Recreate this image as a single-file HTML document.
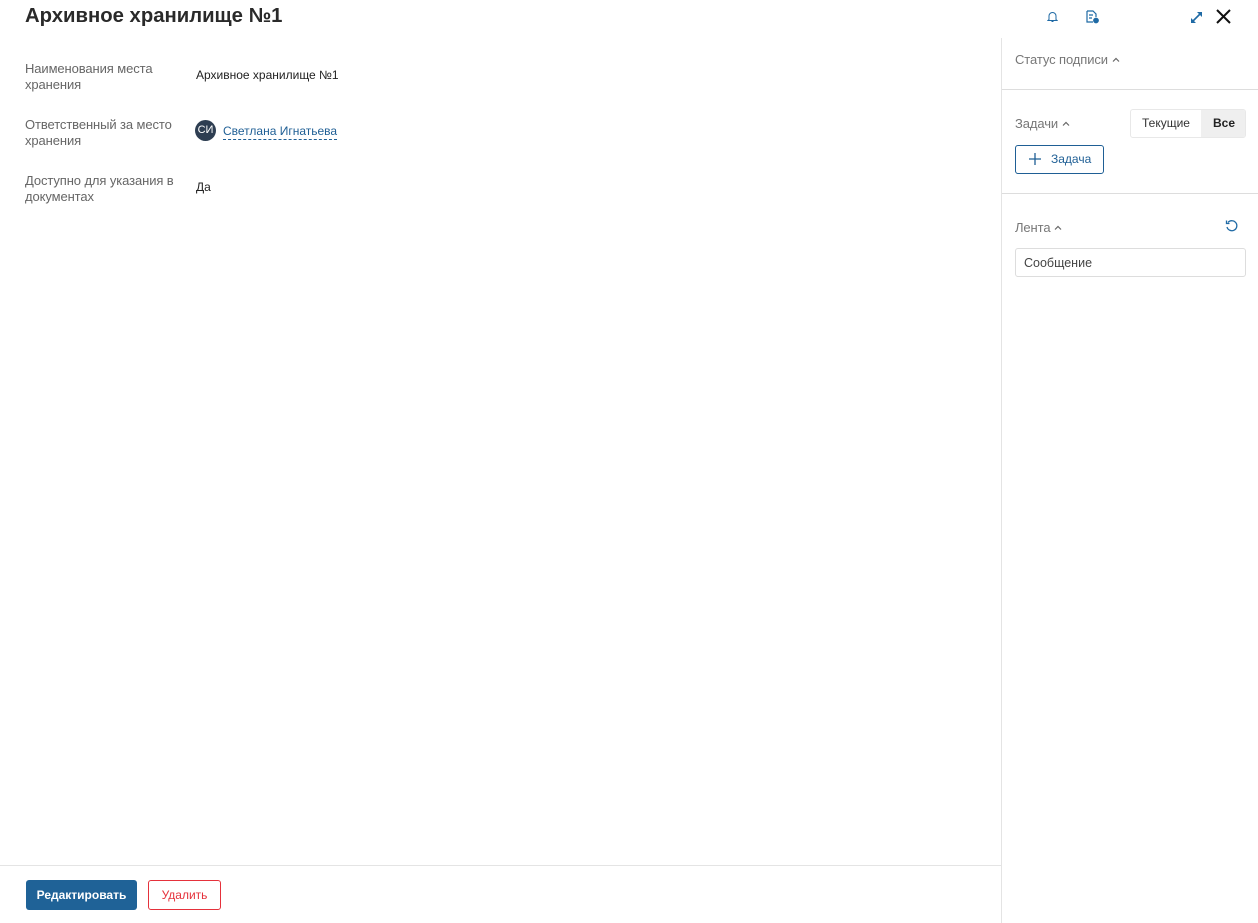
<!DOCTYPE html>
<html><head><meta charset="utf-8"><style>
*{margin:0;padding:0;box-sizing:border-box}
body{width:1258px;height:923px;background:#fff;font-family:"Liberation Sans",sans-serif;color:#222;position:relative;overflow:hidden}
.a{position:absolute}
.lbl{color:#666;font-size:13px;line-height:16px;width:160px;letter-spacing:-0.1px}
.val{font-size:12px;color:#222}
.side{color:#777;font-size:13px;letter-spacing:-0.1px}
.ch{display:inline-block;vertical-align:middle;margin-left:4px;margin-top:-3px}
</style></head><body>
<div class="a" style="left:25px;top:5px;font-size:20.3px;font-weight:bold;color:#2a2a2a">Архивное хранилище №1</div>

<svg class="a" style="left:1047px;top:11px" width="11" height="12" viewBox="0 0 11 12" fill="none" stroke="#1f6aa5" stroke-width="1"><path d="M2 8.5V5a3.5 3.5 0 0 1 7 0v3.5l1 1H1z M4.5 10.5h2"/></svg>
<svg class="a" style="left:1086px;top:10px" width="13" height="14" viewBox="0 0 13 14" fill="none" stroke="#1f6aa5" stroke-width="1.2"><path d="M1 1h6l3 3v3 M1 1v11h6 M3 5h4 M3 8h3"/><circle cx="10" cy="10.5" r="2.3" fill="#1f6aa5"/></svg>
<svg class="a" style="left:1189px;top:10px" width="15" height="15" viewBox="0 0 15 15" stroke="#1f6aa5" stroke-width="1.6" fill="#1f6aa5"><path d="M3 12L12 3"/><path d="M8 2h5v5z M2 8v5h5z" stroke="none"/></svg>
<svg class="a" style="left:1216px;top:9px" width="15" height="15" viewBox="0 0 15 15" stroke="#111" stroke-width="2"><path d="M1 1L14 14M14 1L1 14"/></svg>

<div class="a lbl" style="left:25px;top:61px">Наименования места хранения</div>
<div class="a val" style="left:196px;top:68px">Архивное хранилище №1</div>
<div class="a lbl" style="left:25px;top:117px">Ответственный за место хранения</div>
<div class="a" style="left:195px;top:120px;width:21px;height:21px;border-radius:50%;background:#2e3e52;color:#fff;font-size:11px;line-height:21px;text-align:center">СИ</div>
<div class="a" style="left:223px;top:124px;font-size:12px;color:#1f5f95;border-bottom:1px dashed #1f5f95;line-height:15px">Светлана Игнатьева</div>
<div class="a lbl" style="left:25px;top:173px">Доступно для указания в документах</div>
<div class="a val" style="left:196px;top:180px">Да</div>

<div class="a" style="left:0;top:865px;width:1001px;height:1px;background:#e4e4e4"></div>
<div class="a" style="left:26px;top:880px;width:111px;height:30px;background:#1f6297;border-radius:3px;color:#fff;font-size:12px;font-weight:bold;text-align:center;line-height:30px">Редактировать</div>
<div class="a" style="left:148px;top:880px;width:73px;height:30px;border:1px solid #e5313b;border-radius:3px;color:#e5313b;font-size:12px;text-align:center;line-height:28px">Удалить</div>

<div class="a" style="left:1001px;top:38px;width:1px;height:885px;background:#e4e4e4"></div>
<div class="a side" style="left:1015px;top:52px">Статус подписи<svg class="ch" width="8" height="5"><path d="M1 4.5L4 1.5L7 4.5" fill="none" stroke="#666" stroke-width="1.2"/></svg></div>
<div class="a" style="left:1002px;top:89px;width:256px;height:1px;background:#ddd"></div>
<div class="a side" style="left:1015px;top:116px">Задачи<svg class="ch" width="8" height="5"><path d="M1 4.5L4 1.5L7 4.5" fill="none" stroke="#666" stroke-width="1.2"/></svg></div>
<div class="a" style="left:1130px;top:109px;width:116px;height:29px;border:1px solid #e8e8e8;border-radius:3px;overflow:hidden;font-size:12px">
<div class="a" style="left:0;top:0;width:70px;height:27px;line-height:27px;text-align:center;color:#333">Текущие</div>
<div class="a" style="left:70px;top:0;width:46px;height:27px;line-height:27px;text-align:center;background:#efefef;font-weight:bold;color:#222">Все</div></div>
<div class="a" style="left:1015px;top:145px;width:89px;height:29px;border:1px solid #1f5f95;border-radius:3px;color:#1f5f95;font-size:12px;line-height:27px;padding-left:35px">Задача</div>
<svg class="a" style="left:1029px;top:153px" width="12" height="12" stroke="#1f5f95" stroke-width="1.3"><path d="M6 0v12M0 6h12"/></svg>
<div class="a" style="left:1002px;top:193px;width:256px;height:1px;background:#ddd"></div>
<div class="a side" style="left:1015px;top:220px">Лента<svg class="ch" width="8" height="5"><path d="M1 4.5L4 1.5L7 4.5" fill="none" stroke="#666" stroke-width="1.2"/></svg></div>
<svg class="a" style="left:1225px;top:219px" width="14" height="14" viewBox="0 0 14 14" fill="none" stroke="#1f6aa5" stroke-width="1.3"><path d="M3 3.5A5 5 0 1 1 2 8"/><path d="M1.5 1.5v3h3"/></svg>
<div class="a" style="left:1015px;top:248px;width:231px;height:29px;border:1px solid #ddd;border-radius:3px;font-size:12.5px;color:#444;line-height:29px;padding-left:8px">Сообщение</div>
</body></html>
